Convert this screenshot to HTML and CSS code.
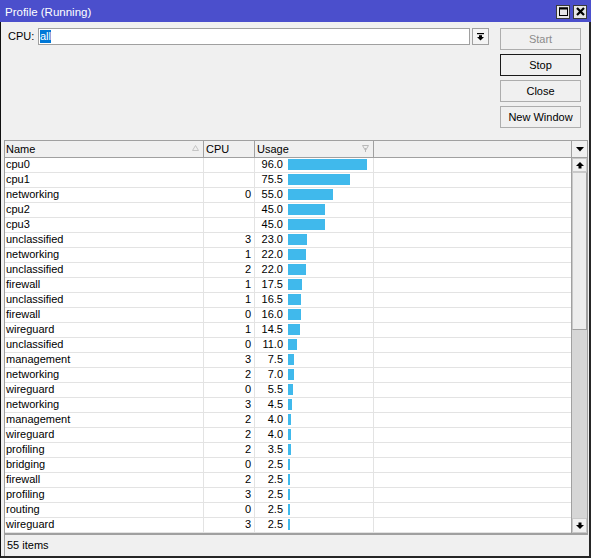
FILE: index.html
```html
<!DOCTYPE html>
<html>
<head>
<meta charset="utf-8">
<title>Profile (Running)</title>
<link rel="stylesheet" href="styles.css">
</head>
<body>
<div class="window">
  <div class="titlebar">
    <span class="title">Profile (Running)</span>
    <div class="tb-buttons">
      <span class="tb-btn"><svg width="9" height="9" viewBox="0 0 9 9"><rect x="0.5" y="1" width="8" height="7.5" fill="none" stroke="#000" stroke-width="1"/><rect x="0" y="0.5" width="9" height="2" fill="#000"/></svg></span>
      <span class="tb-btn"><svg width="9" height="9" viewBox="0 0 9 9"><path d="M1 1 L8 8 M8 1 L1 8" stroke="#000" stroke-width="2.2"/></svg></span>
    </div>
  </div>
  <div class="main">
    <div class="top">
      <div class="cpu-row">
        <span class="cpu-label">CPU:</span>
        <div class="combo"><span class="sel">all</span></div>
        <span class="dd"><svg width="7" height="8" viewBox="0 0 7 8"><rect x="0" y="0" width="7" height="1.2" fill="#000"/><rect x="2" y="2.2" width="3" height="2" fill="#000"/><polygon points="0,4 7,4 3.5,7.6" fill="#000"/></svg></span>
      </div>
      <div class="actions">
        <button class="btn disabled">Start</button>
        <button class="btn default">Stop</button>
        <button class="btn">Close</button>
        <button class="btn">New Window</button>
      </div>
    </div>
    <div class="table">
      <div class="thead">
        <div class="th th-name">Name<svg class="sort" width="7" height="6" viewBox="0 0 7 6"><polygon points="3.5,0.5 6.5,5.5 0.5,5.5" fill="none" stroke="#c4c4c4" stroke-width="1"/></svg></div>
        <div class="th th-cpu">CPU</div>
        <div class="th th-use">Usage<svg class="sort" width="7" height="7" viewBox="0 0 7 7"><polygon points="0.5,0.5 6.5,0.5 3.5,5.5" fill="none" stroke="#b8b8b8" stroke-width="1"/><line x1="3.5" y1="3" x2="3.5" y2="7" stroke="#b8b8b8"/></svg></div>
        <div class="th th-blank"></div>
        <div class="th th-sb"><svg width="8" height="5" viewBox="0 0 8 5"><polygon points="0,0 8,0 4,4.5" fill="#000"/></svg></div>
      </div>
      <div class="tbody">
        <div class="rows">
          <div class="row"><div class="c-name">cpu0</div><div class="c-cpu"></div><div class="c-use"><span class="num">96.0</span><span class="bar" style="width:79px"></span></div><div></div></div>
          <div class="row"><div class="c-name">cpu1</div><div class="c-cpu"></div><div class="c-use"><span class="num">75.5</span><span class="bar" style="width:62px"></span></div><div></div></div>
          <div class="row"><div class="c-name">networking</div><div class="c-cpu">0</div><div class="c-use"><span class="num">55.0</span><span class="bar" style="width:45px"></span></div><div></div></div>
          <div class="row"><div class="c-name">cpu2</div><div class="c-cpu"></div><div class="c-use"><span class="num">45.0</span><span class="bar" style="width:37px"></span></div><div></div></div>
          <div class="row"><div class="c-name">cpu3</div><div class="c-cpu"></div><div class="c-use"><span class="num">45.0</span><span class="bar" style="width:37px"></span></div><div></div></div>
          <div class="row"><div class="c-name">unclassified</div><div class="c-cpu">3</div><div class="c-use"><span class="num">23.0</span><span class="bar" style="width:19px"></span></div><div></div></div>
          <div class="row"><div class="c-name">networking</div><div class="c-cpu">1</div><div class="c-use"><span class="num">22.0</span><span class="bar" style="width:18px"></span></div><div></div></div>
          <div class="row"><div class="c-name">unclassified</div><div class="c-cpu">2</div><div class="c-use"><span class="num">22.0</span><span class="bar" style="width:18px"></span></div><div></div></div>
          <div class="row"><div class="c-name">firewall</div><div class="c-cpu">1</div><div class="c-use"><span class="num">17.5</span><span class="bar" style="width:14px"></span></div><div></div></div>
          <div class="row"><div class="c-name">unclassified</div><div class="c-cpu">1</div><div class="c-use"><span class="num">16.5</span><span class="bar" style="width:13px"></span></div><div></div></div>
          <div class="row"><div class="c-name">firewall</div><div class="c-cpu">0</div><div class="c-use"><span class="num">16.0</span><span class="bar" style="width:13px"></span></div><div></div></div>
          <div class="row"><div class="c-name">wireguard</div><div class="c-cpu">1</div><div class="c-use"><span class="num">14.5</span><span class="bar" style="width:12px"></span></div><div></div></div>
          <div class="row"><div class="c-name">unclassified</div><div class="c-cpu">0</div><div class="c-use"><span class="num">11.0</span><span class="bar" style="width:9px"></span></div><div></div></div>
          <div class="row"><div class="c-name">management</div><div class="c-cpu">3</div><div class="c-use"><span class="num">7.5</span><span class="bar" style="width:6px"></span></div><div></div></div>
          <div class="row"><div class="c-name">networking</div><div class="c-cpu">2</div><div class="c-use"><span class="num">7.0</span><span class="bar" style="width:6px"></span></div><div></div></div>
          <div class="row"><div class="c-name">wireguard</div><div class="c-cpu">0</div><div class="c-use"><span class="num">5.5</span><span class="bar" style="width:5px"></span></div><div></div></div>
          <div class="row"><div class="c-name">networking</div><div class="c-cpu">3</div><div class="c-use"><span class="num">4.5</span><span class="bar" style="width:4px"></span></div><div></div></div>
          <div class="row"><div class="c-name">management</div><div class="c-cpu">2</div><div class="c-use"><span class="num">4.0</span><span class="bar" style="width:3px"></span></div><div></div></div>
          <div class="row"><div class="c-name">wireguard</div><div class="c-cpu">2</div><div class="c-use"><span class="num">4.0</span><span class="bar" style="width:3px"></span></div><div></div></div>
          <div class="row"><div class="c-name">profiling</div><div class="c-cpu">2</div><div class="c-use"><span class="num">3.5</span><span class="bar" style="width:3px"></span></div><div></div></div>
          <div class="row"><div class="c-name">bridging</div><div class="c-cpu">0</div><div class="c-use"><span class="num">2.5</span><span class="bar" style="width:2px"></span></div><div></div></div>
          <div class="row"><div class="c-name">firewall</div><div class="c-cpu">2</div><div class="c-use"><span class="num">2.5</span><span class="bar" style="width:2px"></span></div><div></div></div>
          <div class="row"><div class="c-name">profiling</div><div class="c-cpu">3</div><div class="c-use"><span class="num">2.5</span><span class="bar" style="width:2px"></span></div><div></div></div>
          <div class="row"><div class="c-name">routing</div><div class="c-cpu">0</div><div class="c-use"><span class="num">2.5</span><span class="bar" style="width:2px"></span></div><div></div></div>
          <div class="row"><div class="c-name">wireguard</div><div class="c-cpu">3</div><div class="c-use"><span class="num">2.5</span><span class="bar" style="width:2px"></span></div><div></div></div>
        </div>
        <div class="vscroll">
          <div class="sb-btn sb-up"><svg width="8" height="7" viewBox="0 0 8 7"><polygon points="4,0 8,4 0,4" fill="#000"/><rect x="2.5" y="4" width="3" height="2.5" fill="#000"/></svg></div>
          <div class="thumb"></div>
          <div class="track"></div>
          <div class="sb-btn sb-down"><svg width="8" height="7" viewBox="0 0 8 7"><rect x="2.5" y="0.5" width="3" height="2.5" fill="#000"/><polygon points="0,3 8,3 4,7" fill="#000"/></svg></div>
        </div>
      </div>
    </div>
    <div class="status">55 items</div>
  </div>
</div>
</body>
</html>
```
FILE: styles.css
```css
* { box-sizing: border-box; }
html, body {
  margin: 0;
  padding: 0;
}
body {
  width: 591px;
  height: 558px;
  overflow: hidden;
  font-family: "Liberation Sans", Arial, sans-serif;
  font-size: 11px;
  color: #000;
  background: #f0f0f0;
}
.window {
  width: 591px;
  height: 558px;
  display: flex;
  flex-direction: column;
  background: #4b4fcc;
}
.titlebar {
  height: 22px;
  flex: none;
  display: flex;
  align-items: center;
  justify-content: space-between;
  padding: 0 4px 0 5px;
  color: #fff;
  font-size: 11.5px;
}
.title { margin-top: 1px; }
.tb-buttons {
  display: flex;
  gap: 3px;
  margin-top: 1px;
}
.tb-btn {
  width: 14px;
  height: 14px;
  border: 1px solid #3a3a3a;
  background: #e6e6e6;
  display: flex;
  align-items: center;
  justify-content: center;
}
.main {
  flex: 1;
  display: flex;
  flex-direction: column;
  background: #f0f0f0;
  border-left: 1px solid #101010;
  border-right: 2px solid #262626;
  border-bottom: 2px solid #262626;
}
.top {
  height: 118px;
  flex: none;
  display: flex;
  padding: 6px 8px 0 7px;
}
.cpu-row {
  flex: 1;
  display: flex;
  align-items: flex-start;
  margin-right: 11px;
  height: 17px;
}
.cpu-label {
  width: 30px;
  line-height: 17px;
}
.combo {
  flex: 1;
  height: 17px;
  border: 1px solid #a0a0a0;
  background: #fff;
  padding: 0 1px;
  display: flex;
  align-items: center;
}
.sel {
  display: inline-block;
  background: #0078d7;
  color: #fff;
  line-height: 13px;
}
.dd {
  width: 17px;
  height: 17px;
  margin-left: 2px;
  border: 1px solid #a0a0a0;
  background: #f4f4f4;
  display: flex;
  align-items: center;
  justify-content: center;
}
.actions {
  width: 81px;
  display: flex;
  flex-direction: column;
  gap: 4px;
}
.btn {
  height: 22px;
  border: 1px solid #adadad;
  background: #f0f0f0;
  font-family: inherit;
  font-size: 11px;
  color: #000;
  padding: 0;
  margin: 0;
}
.btn.disabled { color: #8c8c8c; }
.btn.default { border-color: #1a1a1a; }
.table {
  flex: none;
  margin: 0 1px 0 3px;
  border: 1px solid #a0a0a0;
  border-bottom-width: 2px;
  display: flex;
  flex-direction: column;
}
.thead {
  display: flex;
  height: 17px;
  border-bottom: 1px solid #a0a0a0;
  background: #f0f0f0;
}
.th {
  position: relative;
  border-right: 1px solid #a0a0a0;
  line-height: 16px;
  padding-left: 1px;
  white-space: nowrap;
}
.th-name { width: 199px; }
.th-cpu { width: 51px; padding-left: 2px; }
.th-use { width: 119px; padding-left: 2px; }
.th-blank { flex: 1; }
.th-sb {
  width: 15px;
  border-right: none;
  display: flex;
  align-items: center;
  justify-content: center;
  padding: 0;
}
.sort {
  position: absolute;
  right: 4px;
  top: 4px;
}
.tbody {
  display: flex;
  height: 375px;
}
.rows {
  flex: 1;
  overflow: hidden;
  background: #fff;
}
.row {
  display: grid;
  grid-template-columns: 199px 51px 119px 1fr;
  height: 15px;
  border-bottom: 1px solid #e3e3e3;
}
.row > div {
  border-right: 1px solid #e3e3e3;
  line-height: 12px;
  white-space: nowrap;
  overflow: hidden;
}
.row > div:last-child { border-right: none; }
.c-name { padding-left: 1px; }
.c-cpu { text-align: right; padding-right: 3px; }
.c-use { display: flex; align-items: flex-start; }
.num { width: 28px; text-align: right; flex: none; }
.bar {
  flex: none;
  height: 11px;
  margin: 1px 0 0 5px;
  background: #40b9ec;
}
.vscroll {
  width: 16px;
  border-left: 1px solid #a0a0a0;
  display: flex;
  flex-direction: column;
  background: #d6d6d6;
}
.sb-btn {
  background: #f0f0f0;
  border: 1px solid #c8c8c8;
  display: flex;
  align-items: center;
  justify-content: center;
}
.sb-up { height: 14px; }
.sb-down { height: 15px; }
.thumb {
  height: 158px;
  background: #ededed;
  border: 1px solid #c8c8c8;
  border-bottom-color: #a0a0a0;
  border-right-color: #a0a0a0;
}
.track { flex: 1; }
.status {
  flex: 1;
  margin: 0 1px 0 3px;
  border-left: 1px solid #a0a0a0;
  padding-left: 2px;
  line-height: 20px;
}
```
